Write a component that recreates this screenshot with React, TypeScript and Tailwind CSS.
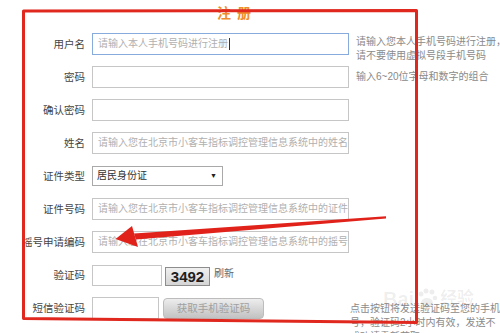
import React from "react";

const FONT = '"Liberation Sans", "Noto Sans CJK SC", sans-serif';

function Label({ text }: { text: string }) {
  return (
    <div className="w-[85px] shrink-0 text-right text-[10.5px] leading-[22px] text-[#444] whitespace-nowrap">
      {text}
    </div>
  );
}

function TextBox({ placeholder, focused, cursor }: { placeholder?: string; focused?: boolean; cursor?: boolean }) {
  return (
    <div
      className={
        "ml-[7px] w-[257px] h-[22px] shrink-0 bg-white flex items-center pl-[5px] overflow-hidden whitespace-nowrap text-[10px] leading-[14px] text-[#b0b0b0] border " +
        (focused ? "border-[#86abdc]" : "border-[#c6c6c6]")
      }
    >
      {placeholder}
      {cursor && <span className="inline-block w-px h-[12px] bg-[#333] ml-[1px]" />}
    </div>
  );
}

export default function App() {
  return (
    <div className="relative w-[500px] h-[333px] overflow-hidden bg-white" style={{ fontFamily: FONT }}>
      {/* title */}
      <div className="h-[33px] pl-[217px] pt-[1px]">
        <span className="text-[14px] leading-[18px] font-bold text-[#f08c2a] tracking-[6px]">注册</span>
      </div>

      {/* form rows */}
      <div className="flex flex-col gap-[11px]">
        <div className="flex items-center h-[22px]">
          <Label text="用户名" />
          <TextBox placeholder="请输入本人手机号码进行注册" focused cursor />
          <div className="self-start mt-[2px] ml-[7px] text-[10px] leading-[14px] text-[#8a8a8a] whitespace-nowrap">
            请输入您本人手机号码进行注册，
            <br />
            请不要使用虚拟号段手机号码
          </div>
        </div>

        <div className="flex items-center h-[22px]">
          <Label text="密码" />
          <TextBox />
          <div className="ml-[7px] text-[10px] leading-[14px] text-[#8a8a8a] whitespace-nowrap">输入6~20位字母和数字的组合</div>
        </div>

        <div className="flex items-center h-[22px]">
          <Label text="确认密码" />
          <TextBox />
        </div>

        <div className="flex items-center h-[22px]">
          <Label text="姓名" />
          <TextBox placeholder="请输入您在北京市小客车指标调控管理信息系统中的姓名" />
        </div>

        <div className="flex items-center h-[22px]">
          <Label text="证件类型" />
          <div className="ml-[7px] w-[131px] h-[20px] border border-[#a9a9a9] bg-white flex items-center justify-between pl-[4px] pr-[5px] text-[10px] leading-[14px] text-[#333]">
            <span>居民身份证</span>
            <span className="text-[7px] leading-[8px] text-[#222]">▼</span>
          </div>
        </div>

        <div className="flex items-center h-[22px]">
          <Label text="证件号码" />
          <TextBox placeholder="请输入您在北京市小客车指标调控管理信息系统中的证件号码" />
        </div>

        <div className="flex items-center h-[22px]">
          <Label text="摇号申请编码" />
          <TextBox placeholder="请输入您在北京市小客车指标调控管理信息系统中的摇号申请编码" />
        </div>

        <div className="flex items-center h-[22px]">
          <Label text="验证码" />
          <div className="ml-[7px] w-[70px] h-[21px] border border-[#c6c6c6] bg-white" />
          <div className="ml-[3px] mt-[2px] w-[45px] h-[19px] border border-[#8d8d8d] bg-gradient-to-b from-[#f0f0f0] to-[#d4d4d4] flex items-center justify-center text-[15px] leading-[17px] font-bold text-[#1e1e1e]">
            3492
          </div>
          <div className="self-start mt-[3px] ml-[4px] text-[10px] leading-[14px] text-[#666]">刷新</div>
        </div>

        <div className="flex items-center h-[22px]">
          <Label text="短信验证码" />
          <div className="ml-[7px] w-[69px] h-[22px] border border-[#c6c6c6] bg-white" />
          <div className="ml-[4px] w-[104px] h-[21px] rounded-[4px] border border-[#bcbcbc] bg-gradient-to-b from-[#ededed] to-[#c2c2c2] flex items-center justify-center text-[10.5px] leading-[14px] text-[#a0a0a0]">
            获取手机验证码
          </div>
          <div className="self-start mt-[5px] ml-[86px] text-[10px] leading-[14px] text-[#8a8a8a] whitespace-nowrap">
            点击按钮将发送验证码至您的手机
            <br />
            号，验证码2小时内有效，发送不
            <br />
            成功请重新获取
          </div>
        </div>
      </div>

      {/* baidu watermark */}
      <div className="absolute left-[383px] top-[288px] flex items-end gap-[2px] text-[20px] leading-[22px] font-bold text-black/[0.07]">
        <span>Bai</span>
        <svg width="22" height="22" viewBox="0 0 22 22" className="fill-black/[0.07]">
          <circle cx="5" cy="6" r="2.5" />
          <circle cx="10" cy="3" r="2.5" />
          <circle cx="16" cy="4" r="2.5" />
          <circle cx="19" cy="10" r="2.3" />
          <ellipse cx="11" cy="15" rx="6" ry="5" />
        </svg>
        <span className="text-[17px]">经验</span>
      </div>

      {/* red annotation box and arrow */}
      <svg className="absolute inset-0 pointer-events-none" width="500" height="333" viewBox="0 0 500 333">
        <path d="M23.5 11 L416.5 10.5 L416.5 322.5 L23.5 318.5 Z" fill="none" stroke="#e0281f" strokeWidth="3" strokeLinejoin="round" />
        <polygon points="386,216.3 386,218.4 136,239.5 134,233.5" fill="#e0221b" />
        <polygon points="115.5,239 132,226 138,247" fill="#e0221b" />
      </svg>
    </div>
  );
}
